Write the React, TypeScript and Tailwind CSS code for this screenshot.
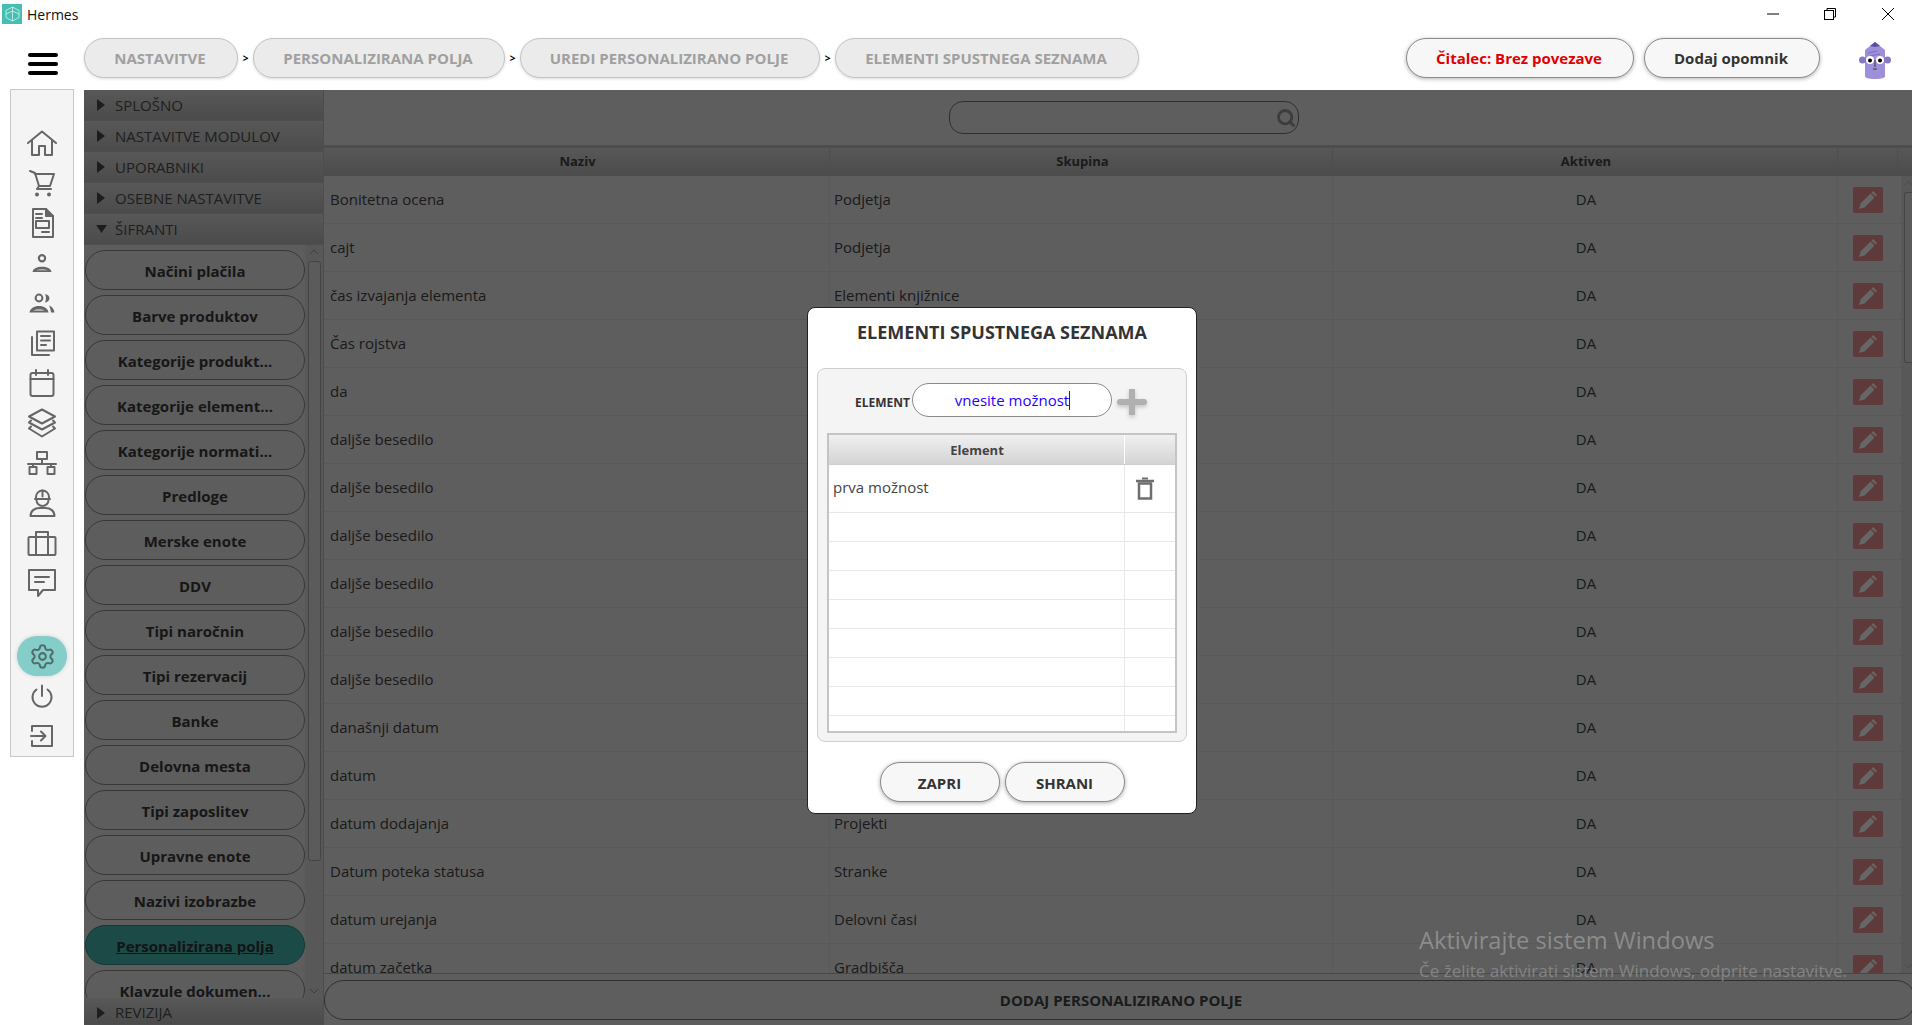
import React from "react";
import { Settings, Search } from "lucide-react";

const IC = { fill: "none", stroke: "#666", strokeWidth: 2, strokeLinecap: "round" as const, strokeLinejoin: "round" as const };

const railTop: React.ReactNode[] = [
  <svg key="home" width="30" height="26" viewBox="0 0 30 26" {...IC}><path d="M1 13 15 1.500 29 13" /><path d="M5 10v15h7v-9h6v9h7V10" /></svg>,
  <svg key="cart" width="26" height="27" viewBox="0 0 26 27" {...IC}><path d="M1 1l5 2 4 13-2 3h14" /><path d="M6 4h19l-4 12H10" /><circle cx="8" cy="24.500" r="2" fill="#666" stroke="none" /><circle cx="20" cy="24.500" r="2" fill="#666" stroke="none" /></svg>,
  <svg key="doc" width="23" height="30" viewBox="0 0 23 30" {...IC}><path d="M2 1h13l7 7v21H2z" /><path d="M15 1v7h7" fill="#666" /><path d="M5 6h6M5 10h6" /><rect x="5" y="13" width="13" height="7" /><path d="M11 24h7" /></svg>,
  <svg key="user" width="20" height="19" viewBox="0 0 19 18"><circle cx="9.500" cy="4" r="3" fill="none" stroke="#666" strokeWidth="2" /><path d="M0.500 17c.6-3.600 4.400-5 9-5s8.400 1.400 9 5z" fill="#666" /><path d="M4 15.500c2-1.200 9-1.200 11 0z" fill="#f4f4f4" /></svg>,
  <svg key="users" width="26" height="20" viewBox="0 0 26 20"><circle cx="10" cy="5" r="3.400" fill="none" stroke="#666" strokeWidth="2" /><path d="M16 1c3 .6 4.400 2.300 4.400 4.200S19 9 16 9.600c1.300-2.600 1.300-6 0-8.600z" fill="#666" /><path d="M0.500 19.500c.6-4 4.500-6.500 9.500-6.500s8.900 2.500 9.500 6.500z" fill="#666" /><path d="M20 12.500c3 .8 5 3.500 5.500 7H22c-.3-2.800-1-5-2-7z" fill="#666" /><path d="M4 17.500c2.500-1.500 9-1.500 12 0z" fill="#f4f4f4" /></svg>,
  <svg key="list" width="26" height="26" viewBox="0 0 26 26" {...IC}><rect x="8" y="1.500" width="17" height="19" /><path d="M3 7v18h17" /><path d="M12 6h9M12 10.500h9M12 15h5" /></svg>,
  <svg key="cal" width="26" height="28" viewBox="0 0 26 28" {...IC}><rect x="1.500" y="4" width="23" height="23" rx="2" /><path d="M1.500 10h23M7 1v5M19 1v5" /></svg>,
  <svg key="layers" width="30" height="30" viewBox="0 0 30 30" {...IC}><path d="M15 1.500 28 8.500 15 15.500 2 8.500z" /><path d="M4 12.500 2 14.500 15 21.500 28 14.500 26 12.500" /><path d="M4 18.500 2 20.500 15 28.500 28 20.500 26 18.500" /></svg>,
  <svg key="net" width="30" height="24" viewBox="0 0 30 24" {...IC}><rect x="10" y="1" width="10" height="7" /><path d="M15 8v5M1 13h28M6 13v3M24 13v3" /><rect x="2.500" y="16" width="7" height="7" /><rect x="20.500" y="16" width="7" height="7" /></svg>,
  <svg key="worker" width="27" height="28" viewBox="0 0 27 28" {...IC}><path d="M7 10V8a6.500 6.500 0 0 1 13 0v2z" /><path d="M13.500 1.500v6M6 10h15" /><path d="M7.500 11a6 6 0 0 0 12 0" /><path d="M1.500 27c0-5 4-8 9-8h6c5 0 9 3 9 8z" /></svg>,
  <svg key="case" width="30" height="26" viewBox="0 0 30 26" {...IC}><rect x="1.500" y="7" width="27" height="18" rx="1" /><path d="M9 7V2h12v5M9 7v18M21 7v18" /></svg>,
  <svg key="chat" width="30" height="30" viewBox="0 0 30 30" {...IC}><path d="M2 2h26v20H16l-5 6v-6H2z" /><path d="M8 9h14M8 14h9" /></svg>,
];

const accTop = ["SPLOŠNO", "NASTAVITVE MODULOV", "UPORABNIKI", "OSEBNE NASTAVITVE"];
const menu = ["Načini plačila", "Barve produktov", "Kategorije produkt...", "Kategorije element...", "Kategorije normati...", "Predloge", "Merske enote", "DDV", "Tipi naročnin", "Tipi rezervacij", "Banke", "Delovna mesta", "Tipi zaposlitev", "Upravne enote", "Nazivi izobrazbe", "Personalizirana polja", "Klavzule dokumen..."];
const rows: [string, string][] = [
  ["Bonitetna ocena", "Podjetja"], ["cajt", "Podjetja"], ["čas izvajanja elementa", "Elementi knjižnice"], ["Čas rojstva", ""], ["da", ""],
  ["daljše besedilo", ""], ["daljše besedilo", ""], ["daljše besedilo", ""], ["daljše besedilo", ""], ["daljše besedilo", ""], ["daljše besedilo", ""],
  ["današnji datum", ""], ["datum", ""], ["datum dodajanja", "Projekti"], ["Datum poteka statusa", "Stranke"], ["datum urejanja", "Delovni časi"], ["datum začetka", "Gradbišča"],
];

function Crumb({ children, w }: { children: string; w: string }) {
  return <div className={`h-10 ${w} flex items-center justify-center pt-px pr-[2px] rounded-[20px] border border-[#c4c4c4] bg-[#ebebeb] text-[15px] font-bold text-[#a0a0a0] shadow-[0_1px_3px_rgba(0,0,0,0.15)]`}>{children}</div>;
}
function Sep() {
  return <span className="w-[15px] text-center text-[10px] font-bold text-black">&gt;</span>;
}
function Tri({ open }: { open?: boolean }) {
  return open
    ? <svg width="11" height="8" viewBox="0 0 11 8" className="ml-[12px] mr-[8px]"><path d="M0 0h11L5.500 8z" fill="#4a4a4a" /></svg>
    : <svg width="8" height="12" viewBox="0 0 8 12" className="ml-[13px] mr-[10px]"><path d="M0 0l8 6-8 6z" fill="#4a4a4a" /></svg>;
}
function Acc({ label, open, h, cls }: { label: string; open?: boolean; h: string; cls?: string }) {
  return (
    <div className={`${h} ${cls ?? ""} shrink-0 flex items-center bg-gradient-to-b from-[#dcdcdc] to-[#bcbcbc] border-b border-[#c4c4c4] text-[15px] text-[#4e4e4e]`}>
      <Tri open={open} />{label}
    </div>
  );
}

export default function App() {
  return (
    <div className="relative h-[1025px] w-[1912px] overflow-hidden bg-white [font-family:'Open_Sans',sans-serif]">
      {/* title bar */}
      <div className="h-[30px] flex items-center pl-[2px] pb-[2px] justify-between">
        <div className="flex items-center">
          <div className="w-5 h-5 bg-[#43bfb4] flex items-center justify-center">
            <svg width="15" height="16" viewBox="0 0 15 16" fill="none" stroke="#bfe9e5" strokeWidth="1"><path d="M7.500 1 14 4.500v7L7.500 15 1 11.500v-7zM7.500 1v14M1 8l6.500-3L14 8" /></svg>
          </div>
          <span className="ml-[5px] text-[14px] text-[#111]">Hermes</span>
        </div>
        <div className="flex items-center gap-[46px] pr-[18px]">
          <svg className="-ml-[2px]" width="12" height="12" viewBox="0 0 12 12"><path d="M0 6h12" stroke="#000" /></svg>
          <svg className="-ml-[1px]" width="12" height="12" viewBox="0 0 12 12" fill="none" stroke="#000"><rect x="0.500" y="2.500" width="9" height="9" /><path d="M3 2.500V.500h8.500V9H9.500" /></svg>
          <svg width="12" height="12" viewBox="0 0 12 12" stroke="#000"><path d="M0 0l12 12M12 0 0 12" /></svg>
        </div>
      </div>

      {/* top bar */}
      <div className="h-[60px] flex items-start pt-[8px]">
        <div className="w-[84px] flex justify-center pl-[1px] pt-[15px]">
          <div className="w-[30px] flex flex-col gap-[5px]">
            <div className="h-[4px] rounded-full bg-black" />
            <div className="h-[4px] rounded-full bg-black" />
            <div className="h-[4px] rounded-full bg-black" />
          </div>
        </div>
        <Crumb w="w-[154px]">NASTAVITVE</Crumb>
        <div className="h-10 flex items-center"><Sep /></div>
        <Crumb w="w-[252px]">PERSONALIZIRANA POLJA</Crumb>
        <div className="h-10 flex items-center"><Sep /></div>
        <Crumb w="w-[300px]">UREDI PERSONALIZIRANO POLJE</Crumb>
        <div className="h-10 flex items-center"><Sep /></div>
        <Crumb w="w-[304px]">ELEMENTI SPUSTNEGA SEZNAMA</Crumb>
        <div className="ml-[267px] w-[228px] h-10 flex items-center justify-center pt-px pr-[2px] rounded-[20px] border border-[#8a8a8a] bg-[#f7f7f7] text-[15px] font-bold text-[#e00000] shadow-[0_1px_4px_rgba(0,0,0,0.3)]">Čitalec: Brez povezave</div>
        <div className="ml-[10px] w-[176px] h-10 flex items-center justify-center pt-px pr-[2px] rounded-[20px] border border-[#8a8a8a] bg-[#f7f7f7] text-[15px] font-bold text-[#333] shadow-[0_1px_4px_rgba(0,0,0,0.3)]">Dodaj opomnik</div>
        <svg className="ml-[39px] mt-[2px]" width="32" height="40" viewBox="0 0 32 40">
          <path d="M6 10 16 2l10 8v26c0 2-3 3-10 3S6 38 6 36z" fill="#9d8fd9" />
          <path d="M11 6l5-4 5 4-5 1z" fill="#5a4da3" />
          <path d="M9 13l9-2M11 16l10-2" stroke="#7d6fc0" strokeWidth="1" />
          <circle cx="3.500" cy="20" r="3.500" fill="#8578c9" /><circle cx="28.500" cy="20" r="3.500" fill="#8578c9" />
          <circle cx="11" cy="20" r="4" fill="#fff" /><circle cx="21" cy="20" r="4" fill="#fff" />
          <circle cx="11" cy="20.500" r="2" fill="#000" /><circle cx="21" cy="20.500" r="2" fill="#000" />
          <path d="M16 20v7M14 29h4" stroke="#222" strokeWidth="0.800" fill="none" />
        </svg>
      </div>

      {/* body */}
      <div className="flex h-[935px]">
        <div className="w-[84px] shrink-0">
          <div className="ml-[10px] -mt-px w-[64px] h-[668px] border border-[#c8c8c8] bg-[#f4f4f4] pt-[33px] flex flex-col items-center">
            {railTop.map((ic, i) => <div key={i} className="h-10 w-full shrink-0 flex items-center justify-center">{ic}</div>)}
            <div className="mt-[33px] h-10 w-[50px] rounded-[20px] bg-[#84cdc9] flex items-center justify-center shadow-[0_0_4px_rgba(0,0,0,0.15)]">
              <Settings size={27} strokeWidth={1.8} color="#4d6e6c" />
            </div>
            <div className="h-10 w-full flex items-center justify-center">
              <svg width="24" height="24" viewBox="0 0 24 24" {...IC}><path d="M12 1.500V12" /><path d="M6.500 5.500a9.500 9.500 0 1 0 11 0" /></svg>
            </div>
            <div className="h-10 w-full flex items-center justify-center">
              <svg width="24" height="24" viewBox="0 0 24 24" {...IC}><path d="M2 7V2h20v20H2v-5" /><path d="M1 12h14M11 7.500l4.500 4.500-4.500 4.500" /></svg>
            </div>
          </div>
        </div>

        {/* sidebar */}
        <div className="w-[240px] shrink-0 flex flex-col border-r border-[#c0c0c0]">
          {accTop.map((a) => <Acc key={a} label={a} h="h-[31px]" />)}
          <Acc label="ŠIFRANTI" open h="h-[31px]" />
          <div className="h-[753px] flex overflow-hidden bg-[#e8e8e8]">
            <div className="w-[221px] pl-[1px] pt-[5px] flex flex-col gap-[5px] shrink-0">
              {menu.map((m) => {
                const active = m === "Personalizirana polja";
                return (
                  <div key={m} className={`h-10 shrink-0 flex items-center justify-center pt-[2px] rounded-[20px] border text-[15px] font-bold ${active ? "bg-[#48b9b2] border-[#2f8f89] underline text-[#333]" : "bg-[#e8e8e8] border-[#8a8a8a] text-[#3a3a3a]"}`}>{m}</div>
                );
              })}
            </div>
            <div className="flex-1 flex flex-col items-center bg-[#dcdcdc] pl-[2px] pr-[2px]">
              <svg className="mt-[4px] shrink-0" width="10" height="6" viewBox="0 0 10 6" fill="none" stroke="#9a9a9a"><path d="M1 5l4-4 4 4" /></svg>
              <div className="mt-[6px] h-[600px] w-[13px] rounded-[3px] border border-[#aaa] bg-[#e4e4e4] shrink-0" />
              <svg className="mt-auto mb-[4px] shrink-0" width="10" height="6" viewBox="0 0 10 6" fill="none" stroke="#9a9a9a"><path d="M1 1l4 4 4-4" /></svg>
            </div>
          </div>
          <Acc label="REVIZIJA" h="h-[27px]" cls="pt-[3px]" />
        </div>

        {/* main */}
        <div className="flex-1 min-w-0 flex flex-col bg-[#ebebeb]">
          <div className="h-[55px] flex justify-center items-start pt-[11px] pl-[12px]">
            <div className="w-[350px] h-[33px] rounded-[14px] border border-[#777] flex items-center justify-end pr-[2px]">
              <Search size={20} strokeWidth={3.5} color="#999" />
            </div>
          </div>
          <div className="h-[31px] flex border-t-[3px] border-b border-[#c0c0c0] bg-gradient-to-b from-[#dcdcdc] to-[#bcbcbc] text-[13px] font-bold text-[#444]">
            <div className="w-[506px] flex items-center justify-center pt-px pl-[2px] border-r border-[#c4c4c4]">Naziv</div>
            <div className="w-[503px] flex items-center justify-center pt-px pl-[3px] border-r border-[#c4c4c4]">Skupina</div>
            <div className="w-[505px] flex items-center justify-center pt-px pl-[2px] border-r border-[#c4c4c4]">Aktiven</div>
            <div className="w-[60px] border-r border-[#c4c4c4]" />
          </div>
          <div className="h-[797px] flex overflow-hidden">
            <div className="w-[1577px] shrink-0">
              {rows.map(([a, b], i) => (
                <div key={i} className="h-[48px] grid grid-cols-[506px_503px_505px_63px] border-b border-[#dedede] text-[15px] text-[#444]">
                  <div className="flex items-center pl-[6px] border-r border-[#dedede]">{a}</div>
                  <div className="flex items-center pl-[4px] border-r border-[#dedede]">{b}</div>
                  <div className="flex items-center justify-center pl-[2px] border-r border-[#dedede]">DA</div>
                  <div className="flex items-center pl-[15px]">
                    <div className="w-[30px] h-[26px] rounded-[2px] bg-[#eb9191] flex items-center justify-center">
                      <svg width="18" height="18" viewBox="0 0 18 18" fill="#fff"><path d="M0 18l1.500-5.500L11.500 2.500l4 4L5.500 16.500zM12.500 1.500 14 0l4 4-1.500 1.500z" /></svg>
                    </div>
                  </div>
                </div>
              ))}
            </div>
            <div className="flex-1 flex flex-col items-center bg-[#dcdcdc] pl-[3px]">
              <svg className="mt-[4px] shrink-0" width="9" height="6" viewBox="0 0 10 6" fill="none" stroke="#aaa"><path d="M1 5l4-4 4 4" /></svg>
              <div className="mt-[6px] h-[171px] w-full rounded-l-[3px] border border-r-0 border-[#aaa] bg-[#e4e4e4] shrink-0" />
              <svg className="mt-auto mb-[4px] shrink-0" width="9" height="6" viewBox="0 0 10 6" fill="none" stroke="#aaa"><path d="M1 1l4 4 4-4" /></svg>
            </div>
          </div>
          <div className="flex-1 border-t border-[#b4b4b4] pt-[6px] -mr-[4px]">
            <div className="h-[40px] rounded-[20px] border border-[#777] flex items-center justify-center pl-[2px] text-[15px] font-bold text-[#444]">DODAJ PERSONALIZIRANO POLJE</div>
          </div>
        </div>
      </div>

      {/* dim overlay */}
      <div className="absolute left-[84px] top-[90px] right-0 bottom-0 bg-black/60" />

      {/* windows watermark */}
      <div className="absolute left-[1419px] top-[922px] text-[#8c8c8c] whitespace-nowrap">
        <div className="text-[23.7px] leading-[36px]">Aktivirajte sistem Windows</div>
        <div className="text-[17px] leading-[24px] mt-[1px] text-[#848484]">Če želite aktivirati sistem Windows, odprite nastavitve.</div>
      </div>

      {/* modal */}
      <div className="absolute left-[807px] top-[307px] w-[390px] h-[507px] rounded-[8px] border border-[#222] bg-white flex flex-col">
        <div className="h-[60px] pt-[11px] text-center text-[18px] font-bold text-[#333]">ELEMENTI SPUSTNEGA SEZNAMA</div>
        <div className="mx-[9px] h-[374px] rounded-[8px] border border-[#cfcfcf] bg-[#f4f4f4] px-[9px] pt-[14px]">
          <div className="h-[34px] flex items-center pl-[28px]">
            <span className="w-[57px] text-[12px] font-bold text-[#333] pt-[5px]">ELEMENT</span>
            <div className="w-[200px] h-[34px] rounded-[17px] border border-[#8a8a8a] bg-white flex items-center justify-center pl-[1px] text-[15px] text-[#2a00ff]">vnesite možnost<span className="inline-block w-px h-[19px] bg-[#2a00ff]" /></div>
            <svg className="ml-[5px] mt-[3px] drop-shadow-[0_2px_2px_rgba(0,0,0,0.2)]" width="30" height="26" viewBox="0 0 30 26" fill="#b0b0b0"><rect x="0" y="10" width="30" height="6" rx="3" /><rect x="12" y="0" width="6" height="26" /></svg>
          </div>
          <div className="mt-[16px] h-[300px] border-2 border-[#c4c4c4] bg-white overflow-hidden">
            <div className="h-[30px] grid grid-cols-[296px_1fr] bg-gradient-to-b from-[#f0f0f0] to-[#d4d4d4] border-b border-[#cfcfcf] text-[13px] font-bold text-[#444]">
              <div className="flex items-center justify-center pt-[2px] pl-[1px] border-r border-white">Element</div>
              <div />
            </div>
            <div className="h-[48px] grid grid-cols-[296px_1fr] border-b border-[#e8e8e8] text-[15px] text-[#444]">
              <div className="flex items-center pl-[4px] pb-[2px] border-r border-[#e8e8e8]">prva možnost</div>
              <div className="flex items-center pl-[11px]">
                <svg width="18" height="23" viewBox="0 0 18 23" fill="none" stroke="#6e6e6e" strokeWidth="2.5"><path d="M0 4h18" /><path d="M6 1.500h6" strokeWidth="2" /><rect x="3" y="6.500" width="12" height="15" /></svg>
              </div>
            </div>
            {[0, 1, 2, 3, 4, 5, 6, 7].map((r) => (
              <div key={r} className="h-[29px] grid grid-cols-[296px_1fr] border-b border-[#e8e8e8]">
                <div className="border-r border-[#e8e8e8]" />
                <div />
              </div>
            ))}
          </div>
        </div>
        <div className="mt-[20px] flex justify-center gap-[5px]">
          <div className="w-[120px] h-10 flex items-center justify-center pt-[2px] rounded-[20px] border border-[#8a8a8a] bg-[#f7f7f7] text-[15px] font-bold text-[#333] shadow-[0_1px_4px_rgba(0,0,0,0.35)]">ZAPRI</div>
          <div className="w-[120px] h-10 flex items-center justify-center pt-[2px] rounded-[20px] border border-[#8a8a8a] bg-[#f7f7f7] text-[15px] font-bold text-[#333] shadow-[0_1px_4px_rgba(0,0,0,0.35)]">SHRANI</div>
        </div>
      </div>
    </div>
  );
}
